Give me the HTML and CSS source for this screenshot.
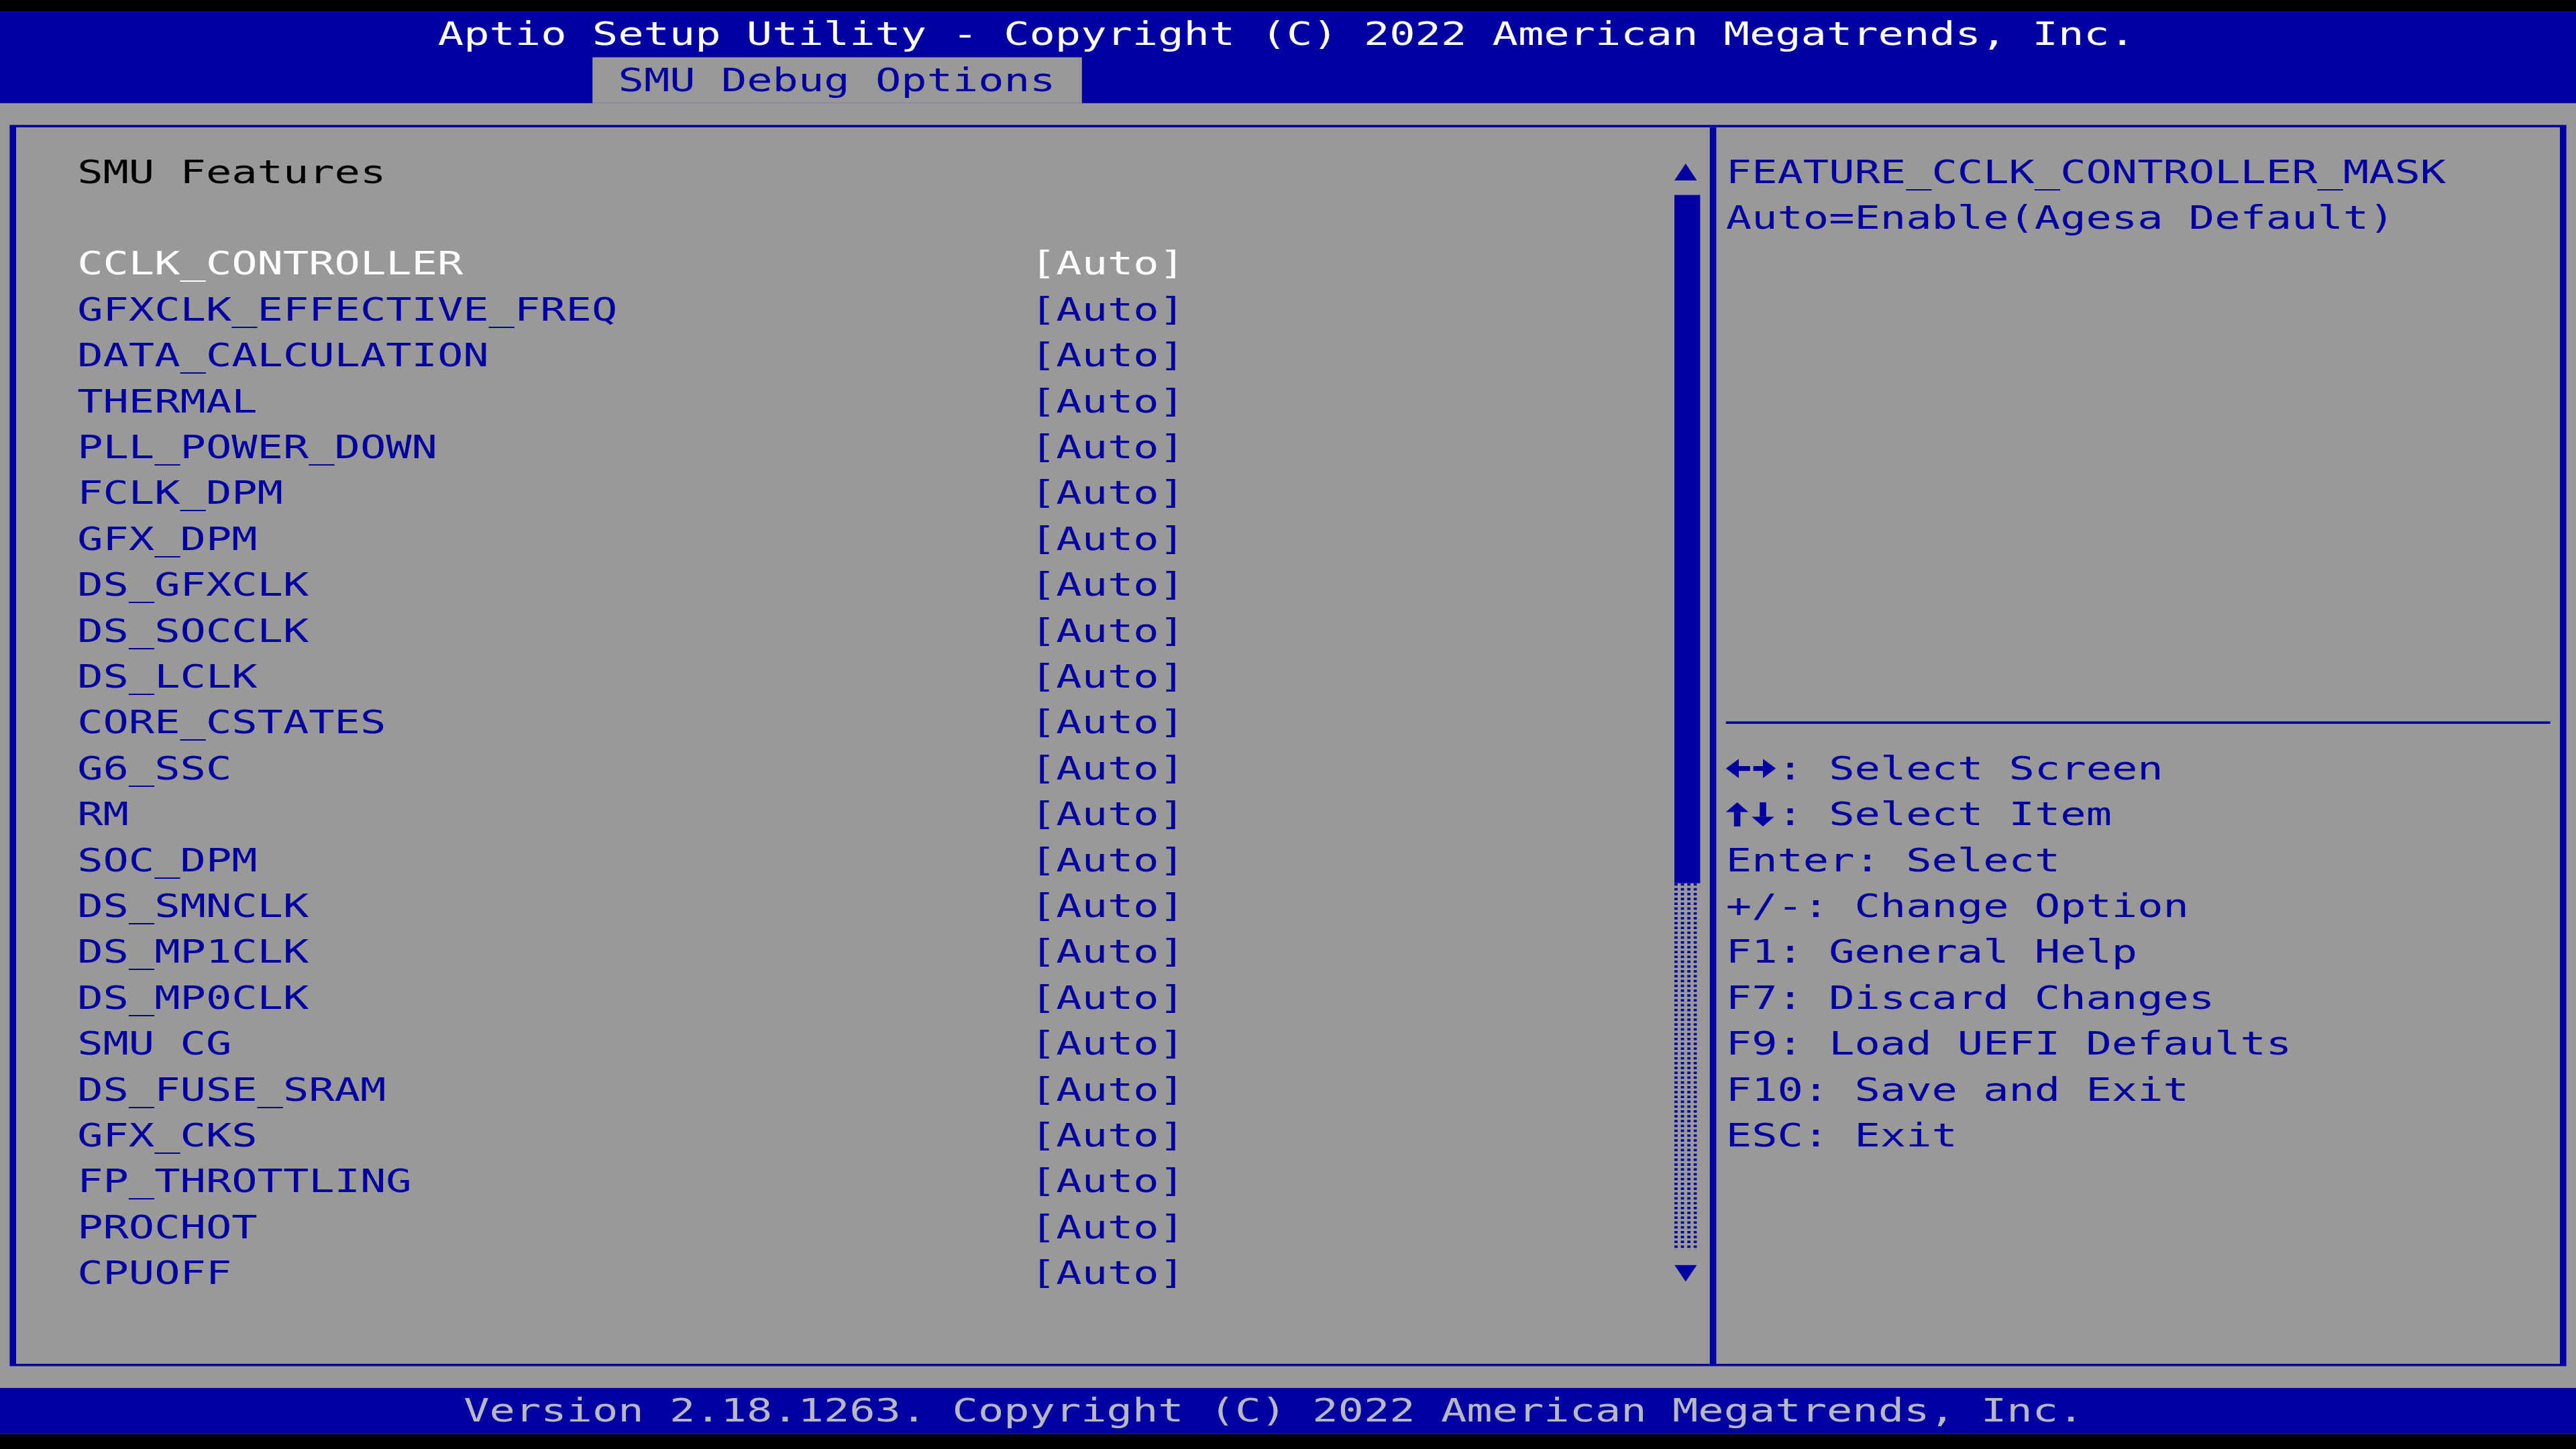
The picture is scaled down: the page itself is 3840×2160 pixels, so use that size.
FILE: index.html
```html
<!DOCTYPE html>
<html lang="en">
<head>
    <meta charset="UTF-8">
    <title>Aptio Setup Utility</title>
    <link rel="stylesheet" href="styles.css">
</head>
<body>

<div class="screen">
    <header class="title-bar">
        <div class="title">Aptio Setup Utility - Copyright (C) 2022 American Megatrends, Inc.</div>
        <nav class="tabs">
            <span class="tab">SMU Debug Options</span>
        </nav>
    </header>

    <main class="workspace">
        <div class="frame">
            <section class="menu">
                <div class="menu-list">
                    <div class="row heading">SMU Features</div>
                    <div class="row"></div>
                    <div class="row item selected"><span class="name">CCLK_CONTROLLER</span><span class="value">[Auto]</span></div>
                    <div class="row item"><span class="name">GFXCLK_EFFECTIVE_FREQ</span><span class="value">[Auto]</span></div>
                    <div class="row item"><span class="name">DATA_CALCULATION</span><span class="value">[Auto]</span></div>
                    <div class="row item"><span class="name">THERMAL</span><span class="value">[Auto]</span></div>
                    <div class="row item"><span class="name">PLL_POWER_DOWN</span><span class="value">[Auto]</span></div>
                    <div class="row item"><span class="name">FCLK_DPM</span><span class="value">[Auto]</span></div>
                    <div class="row item"><span class="name">GFX_DPM</span><span class="value">[Auto]</span></div>
                    <div class="row item"><span class="name">DS_GFXCLK</span><span class="value">[Auto]</span></div>
                    <div class="row item"><span class="name">DS_SOCCLK</span><span class="value">[Auto]</span></div>
                    <div class="row item"><span class="name">DS_LCLK</span><span class="value">[Auto]</span></div>
                    <div class="row item"><span class="name">CORE_CSTATES</span><span class="value">[Auto]</span></div>
                    <div class="row item"><span class="name">G6_SSC</span><span class="value">[Auto]</span></div>
                    <div class="row item"><span class="name">RM</span><span class="value">[Auto]</span></div>
                    <div class="row item"><span class="name">SOC_DPM</span><span class="value">[Auto]</span></div>
                    <div class="row item"><span class="name">DS_SMNCLK</span><span class="value">[Auto]</span></div>
                    <div class="row item"><span class="name">DS_MP1CLK</span><span class="value">[Auto]</span></div>
                    <div class="row item"><span class="name">DS_MP0CLK</span><span class="value">[Auto]</span></div>
                    <div class="row item"><span class="name">SMU CG</span><span class="value">[Auto]</span></div>
                    <div class="row item"><span class="name">DS_FUSE_SRAM</span><span class="value">[Auto]</span></div>
                    <div class="row item"><span class="name">GFX_CKS</span><span class="value">[Auto]</span></div>
                    <div class="row item"><span class="name">FP_THROTTLING</span><span class="value">[Auto]</span></div>
                    <div class="row item"><span class="name">PROCHOT</span><span class="value">[Auto]</span></div>
                    <div class="row item"><span class="name">CPUOFF</span><span class="value">[Auto]</span></div>
                </div>

                <div class="scrollbar">
                    <div class="arrow up"></div>
                    <div class="thumb"></div>
                    <div class="track"></div>
                    <div class="arrow down"></div>
                </div>
            </section>

            <aside class="help">
                <div class="help-text">
                    <div class="row">FEATURE_CCLK_CONTROLLER_MASK</div>
                    <div class="row">Auto=Enable(Agesa Default)</div>
                </div>
                <div class="separator"></div>
                <div class="keys">
                    <div class="row">
                        <svg class="keycap" viewBox="0 0 16 19">
                            <polygon points="0,9.5 4,5.5 4,13.5"/>
                            <rect x="4" y="8.5" width="3.5" height="2"/>
                            <rect x="8.5" y="8.5" width="3" height="2"/>
                            <polygon points="11.5,5.5 15.5,9.5 11.5,13.5"/>
                        </svg><span>: Select Screen</span>
                    </div>
                    <div class="row">
                        <svg class="keycap" viewBox="0 0 16 19">
                            <polygon points="3.5,4.5 7,8.5 0,8.5"/>
                            <rect x="2.5" y="8.5" width="2" height="6"/>
                            <rect x="10.5" y="4.5" width="2" height="6"/>
                            <polygon points="8,10.5 15,10.5 11.5,14.5"/>
                        </svg><span>: Select Item</span>
                    </div>
                    <div class="row">Enter: Select</div>
                    <div class="row">+/-: Change Option</div>
                    <div class="row">F1: General Help</div>
                    <div class="row">F7: Discard Changes</div>
                    <div class="row">F9: Load UEFI Defaults</div>
                    <div class="row">F10: Save and Exit</div>
                    <div class="row">ESC: Exit</div>
                </div>
            </aside>
        </div>
    </main>

    <footer class="status-bar">Version 2.18.1263. Copyright (C) 2022 American Megatrends, Inc.</footer>
</div>

</body>
</html>
```

FILE: styles.css
```css
/* Text-mode setup screen: 100 x 31 cells of 8 x 19, stretched to the panel */
html, body {
    margin: 0;
    padding: 0;
}

body {
    background: #000;
    width: 3840px;
    height: 2160px;
    padding-top: 17px;
    box-sizing: border-box;
    overflow: hidden;
}

.screen {
    width: 800px;
    height: 589px;
    transform: scale(4.8, 3.6);
    transform-origin: 0 0;
    display: flex;
    flex-direction: column;
    background: #999999;
    font-family: "DejaVu Sans Mono", "Liberation Mono", monospace;
    font-size: 13.288px;
    line-height: 20.8px;
}

.row {
    height: 19px;
    display: flex;
    white-space: pre;
}

/* top bar */
.title-bar {
    background: #0000a0;
    height: 38px;
}

.title {
    height: 19px;
    padding-left: 136px;
    color: #ffffff;
    white-space: pre;
}

.tabs {
    height: 19px;
    display: flex;
    padding-left: 184px;
}

.tab {
    background: #999999;
    color: #0000a0;
    padding: 0 8px;
}

/* main frame */
.workspace {
    flex: 1;
    display: flex;
    padding: 9px 3px;
}

.frame {
    flex: 1;
    display: flex;
    border: solid #0000a0;
    border-width: 1px 2px;
}

.menu {
    flex: 0 0 526px;
    display: flex;
}

.menu-list {
    flex: 1;
    padding: 9px 0 0 19px;
    color: #0000a0;
}

.heading {
    color: #000000;
}

.item .name {
    width: 296px;
}

.item.selected {
    color: #ffffff;
}

/* scrollbar */
.scrollbar {
    width: 8px;
    margin-right: 3px;
    padding-top: 9px;
}

.arrow {
    height: 19px;
    padding-top: 6px;
    box-sizing: border-box;
}

.arrow::before {
    content: "";
    display: block;
    width: 7px;
    height: 7px;
    background: #0000a0;
}

.arrow.up::before {
    clip-path: polygon(50% 0, 100% 100%, 0 100%);
}

.arrow.down::before {
    clip-path: polygon(0 0, 100% 0, 50% 100%);
}

.thumb {
    height: 285px;
    background: #0000a0;
}

.track {
    width: 7px;
    height: 152px;
    background: conic-gradient(at 1px 1px, transparent 75%, #0000a0 0) 0 0 / 2px 2px;
}

/* help pane */
.help {
    flex: 1;
    border-left: 2px solid #0000a0;
    padding: 9px 3px 0 3px;
    color: #0000a0;
}

.help-text {
    height: 228px;
}

.separator {
    margin: 9px 0;
    border-top: 1px solid #0000a0;
}

.keycap {
    width: 16px;
    height: 19px;
    flex: none;
    fill: #0000a0;
}

/* bottom bar */
.status-bar {
    height: 19px;
    padding-left: 144px;
    background: #0000a0;
    color: #b8b8c4;
    white-space: pre;
}
```
